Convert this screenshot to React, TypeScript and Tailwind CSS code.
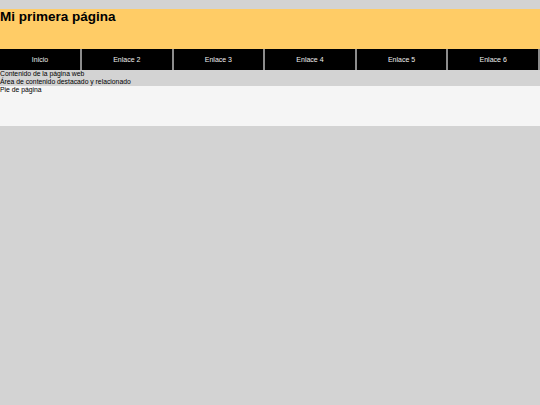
const links = ['Enlace 2', 'Enlace 3', 'Enlace 4', 'Enlace 5', 'Enlace 6']

export default function App() {
  return (
    <div className="min-h-[405px] bg-[#d3d3d3] pt-[9px] font-['Liberation_Sans',Arial,sans-serif] text-black">
      <header className="h-[40px] bg-[#ffcc66]">
        <h1 className="text-[13.5px] leading-[15px] font-bold">Mi primera página</h1>
      </header>
      <nav className="flex h-[21px] bg-black">
        <a className="flex w-[82px] items-center justify-center border-r-2 border-[#8c8c8c] pt-[2px] text-[7px] text-[#eeeeee]">
          Inicio
        </a>
        {links.map((l) => (
          <a
            key={l}
            className="flex w-[91.6px] items-center justify-center border-r-2 border-[#8c8c8c] pt-[2px] text-[7px] text-[#eeeeee]"
          >
            {l}
          </a>
        ))}
      </nav>
      <main className="text-[6.8px] leading-[7.5px]">
        <section>Contenido de la página web</section>
        <aside>Área de contenido destacado y relacionado</aside>
      </main>
      <footer className="mt-px h-[40px] bg-[#f5f5f5] text-[6.8px] leading-[7.5px]">Pie de página</footer>
    </div>
  )
}
